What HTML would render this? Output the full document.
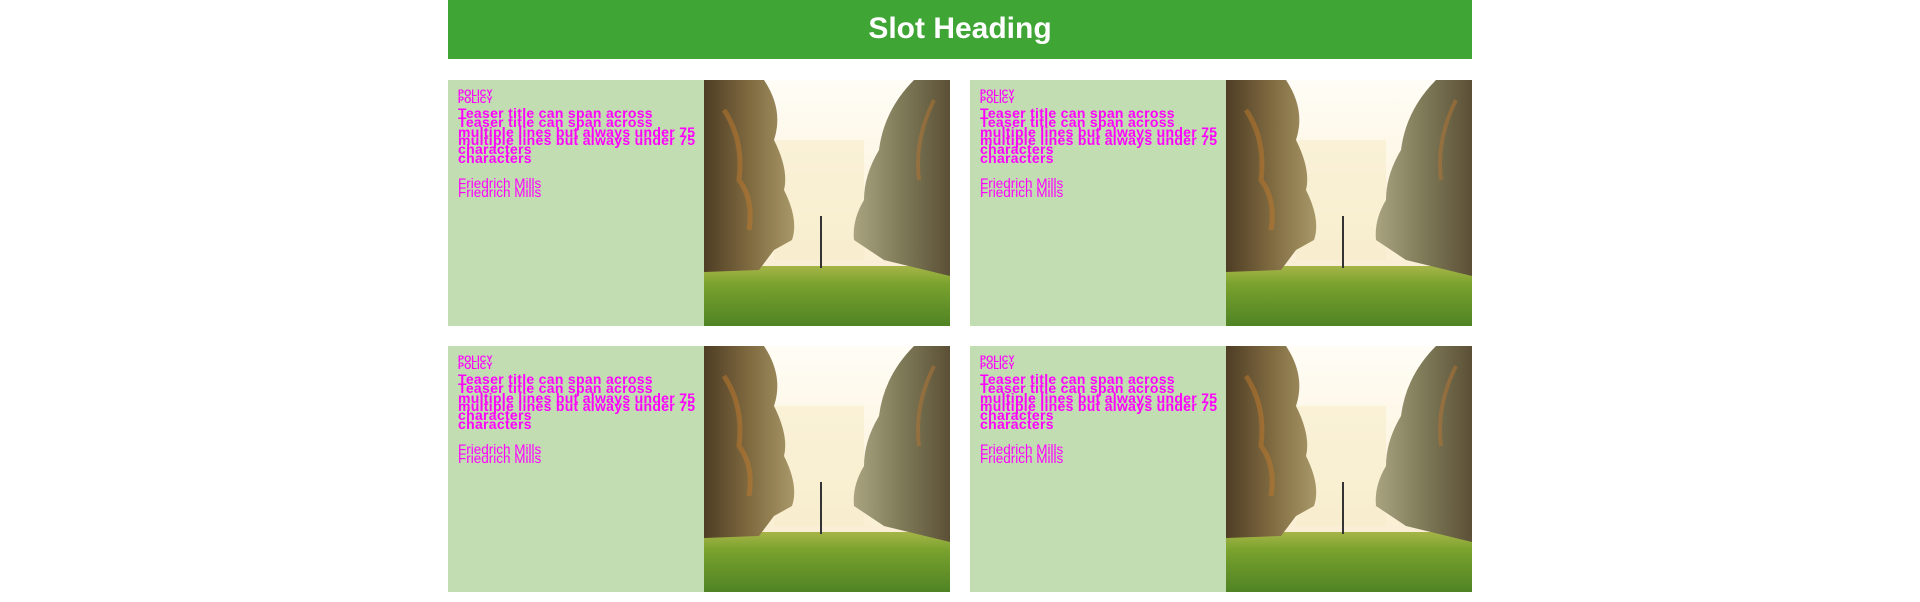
<!DOCTYPE html>
<html><head><meta charset="utf-8"><style>
*{margin:0;padding:0;box-sizing:border-box}
body{width:1920px;height:602px;background:#fff;position:relative;overflow:hidden;font-family:"Liberation Sans",sans-serif}
.hd{position:absolute;left:448px;top:0;width:1024px;height:59px;background:#3fa535;color:#fff;font-weight:bold;font-size:30px;text-align:center;line-height:58px}
.card{position:absolute;width:502px;height:246px;background:#c2ddb1}
.card svg{position:absolute;left:256px;top:0;width:246px;height:246px}
.t{position:absolute;left:10px;color:#f0f;white-space:nowrap}
.p{font-size:9px;font-weight:bold;letter-spacing:0.2px}
.ti{font-size:14px;font-weight:bold;letter-spacing:0.3px}
.a{font-size:13.5px}
</style></head><body>
<div class="hd">Slot Heading</div>
<svg width="0" height="0" style="position:absolute"><defs>
<linearGradient id="sky" x1="0" y1="0" x2="0" y2="1"><stop offset="0" stop-color="#fffdf6"/><stop offset="0.7" stop-color="#fbf0d6"/><stop offset="1" stop-color="#f3ead4"/></linearGradient>
<linearGradient id="gr" x1="0" y1="0" x2="0" y2="1"><stop offset="0" stop-color="#a6b548"/><stop offset="0.3" stop-color="#7aa22e"/><stop offset="1" stop-color="#4f8324"/></linearGradient>
<linearGradient id="lt" x1="0" y1="0" x2="1" y2="0"><stop offset="0" stop-color="#4e3d25"/><stop offset="0.5" stop-color="#7f6a40"/><stop offset="1" stop-color="#a89868"/></linearGradient>
<linearGradient id="rt" x1="1" y1="0" x2="0" y2="0"><stop offset="0" stop-color="#5c5036"/><stop offset="0.5" stop-color="#7e7a58"/><stop offset="1" stop-color="#a9a380"/></linearGradient>
<symbol id="img" viewBox="0 0 246 246">
<rect width="246" height="246" fill="url(#sky)"/>
<rect x="70" y="60" width="90" height="120" fill="#f7ecc9" opacity="0.6"/>
<rect y="186" width="246" height="60" fill="url(#gr)"/>
<path d="M0 0 L60 0 Q80 30 70 60 Q85 90 80 110 Q95 140 88 160 L70 170 L55 190 L0 192 Z" fill="url(#lt)"/>
<path d="M20 30 Q40 60 35 100 Q50 120 45 150" stroke="#c27a2c" stroke-width="5" fill="none" opacity="0.5"/>
<path d="M246 0 L210 0 Q180 30 175 70 Q160 95 160 120 Q148 140 150 160 L180 180 L246 196 Z" fill="url(#rt)"/>
<path d="M230 20 Q210 60 215 100" stroke="#b57634" stroke-width="4" fill="none" opacity="0.5"/>
<rect x="116" y="136" width="2" height="52" fill="#333"/>
</symbol></defs></svg>

<div class="card" style="left:448px;top:80px">
<div class="t p" style="top:8px">POLICY</div><div class="t p" style="top:15px">POLICY</div>
<div class="t ti" style="top:25px">Teaser title can span across</div><div class="t ti" style="top:34px">Teaser title can span across</div>
<div class="t ti" style="top:44px">multiple lines but always under 75</div><div class="t ti" style="top:52px">multiple lines but always under 75</div>
<div class="t ti" style="top:61px">characters</div><div class="t ti" style="top:70px">characters</div>
<div class="t a" style="top:96px">Friedrich Mills</div><div class="t a" style="top:105px">Friedrich Mills</div>
<svg><use href="#img"/></svg></div>

<div class="card" style="left:970px;top:80px">
<div class="t p" style="top:8px">POLICY</div><div class="t p" style="top:15px">POLICY</div>
<div class="t ti" style="top:25px">Teaser title can span across</div><div class="t ti" style="top:34px">Teaser title can span across</div>
<div class="t ti" style="top:44px">multiple lines but always under 75</div><div class="t ti" style="top:52px">multiple lines but always under 75</div>
<div class="t ti" style="top:61px">characters</div><div class="t ti" style="top:70px">characters</div>
<div class="t a" style="top:96px">Friedrich Mills</div><div class="t a" style="top:105px">Friedrich Mills</div>
<svg><use href="#img"/></svg></div>

<div class="card" style="left:448px;top:346px">
<div class="t p" style="top:8px">POLICY</div><div class="t p" style="top:15px">POLICY</div>
<div class="t ti" style="top:25px">Teaser title can span across</div><div class="t ti" style="top:34px">Teaser title can span across</div>
<div class="t ti" style="top:44px">multiple lines but always under 75</div><div class="t ti" style="top:52px">multiple lines but always under 75</div>
<div class="t ti" style="top:61px">characters</div><div class="t ti" style="top:70px">characters</div>
<div class="t a" style="top:96px">Friedrich Mills</div><div class="t a" style="top:105px">Friedrich Mills</div>
<svg><use href="#img"/></svg></div>

<div class="card" style="left:970px;top:346px">
<div class="t p" style="top:8px">POLICY</div><div class="t p" style="top:15px">POLICY</div>
<div class="t ti" style="top:25px">Teaser title can span across</div><div class="t ti" style="top:34px">Teaser title can span across</div>
<div class="t ti" style="top:44px">multiple lines but always under 75</div><div class="t ti" style="top:52px">multiple lines but always under 75</div>
<div class="t ti" style="top:61px">characters</div><div class="t ti" style="top:70px">characters</div>
<div class="t a" style="top:96px">Friedrich Mills</div><div class="t a" style="top:105px">Friedrich Mills</div>
<svg><use href="#img"/></svg></div>
</body></html>
